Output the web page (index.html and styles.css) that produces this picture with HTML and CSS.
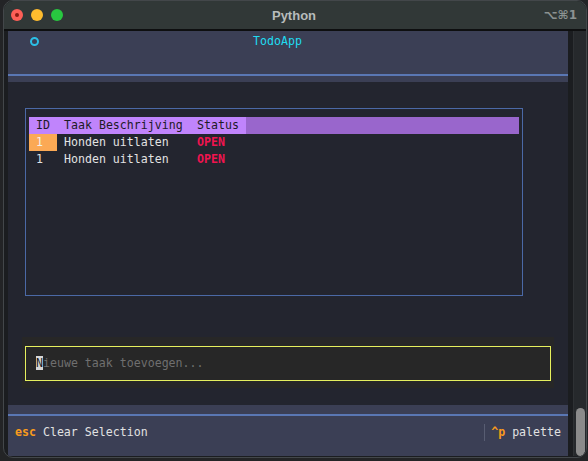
FILE: index.html
```html
<!DOCTYPE html>
<html>
<head>
<meta charset="utf-8">
<link rel="stylesheet" href="styles.css">
</head>
<body>
<div class="window">
  <div class="titlebar">
    <div class="lights">
      <span class="light red"><i></i></span>
      <span class="light yellow"></span>
      <span class="light green"></span>
    </div>
    <div class="title">Python</div>
    <div class="shortcut">⌥⌘1</div>
  </div>
  <div class="sep-line"></div>
  <div class="frame">
    <div class="term">
      <header class="app-header">
        <div class="header-top">
          <div class="header-row">
            <span class="app-icon"></span>
            <span class="app-title">TodoApp</span>
          </div>
        </div>
      </header>
      <main class="app-body">
        <div class="table-box">
          <div class="grid">
            <div class="th">ID</div>
            <div class="th">Taak Beschrijving</div>
            <div class="th">Status</div>
            <div class="th-fill"></div>

            <div class="td sel">1</div>
            <div class="td">Honden uitlaten</div>
            <div class="td open">OPEN</div>
            <div></div>

            <div class="td">1</div>
            <div class="td">Honden uitlaten</div>
            <div class="td open">OPEN</div>
            <div></div>
          </div>
        </div>
        <div class="input-wrap">
          <div class="input"><span class="cursor">N</span>ieuwe taak toevoegen...</div>
        </div>
      </main>
      <footer class="app-footer">
        <div class="footer-inner">
          <div class="footer-row">
            <span class="binding"><span class="key">esc</span> Clear Selection</span>
            <span class="binding right"><span class="key">^p</span> palette</span>
          </div>
        </div>
      </footer>
    </div>
    <div class="gutter"></div>
    <div class="scroll"><div class="thumb"></div></div>
  </div>
</div>
</body>
</html>
```
FILE: styles.css
```css
* { box-sizing: border-box; }
html, body { margin: 0; padding: 0; }
body {
  width: 588px;
  height: 461px;
  overflow: hidden;
  background: #232426;
  font-family: "DejaVu Sans Mono", monospace;
}
.window {
  margin-left: 3px;
  width: 584px;
  height: 458px;
  border: 1px solid #43474a;
  border-radius: 10px;
  background: #1b1d20;
  overflow: hidden;
  display: flex;
  flex-direction: column;
}
.titlebar {
  height: 28px;
  flex: none;
  background: #313837;
  display: grid;
  grid-template-columns: 1fr auto 1fr;
  align-items: center;
  padding: 0 9px 0 7px;
}
.lights { display: flex; gap: 8px; }
.light {
  width: 12px;
  height: 12px;
  border-radius: 50%;
  display: flex;
  align-items: center;
  justify-content: center;
}
.red { background: #fe5f57; }
.red i { width: 4px; height: 4px; border-radius: 50%; background: #8c1a12; }
.yellow { background: #febc2e; }
.green { background: #28c840; }
.title {
  font-family: "Liberation Sans", Arial, sans-serif;
  font-weight: 700;
  font-size: 13px;
  color: #b7bbbb;
}
.shortcut {
  justify-self: end;
  font-family: "DejaVu Sans", sans-serif;
  font-weight: 700;
  font-size: 12px;
  color: #8c9291;
}
.sep-line { height: 2px; flex: none; background: #0e0f10; }
.frame { display: flex; padding-left: 4px; height: 425px; flex: none; }
.term {
  width: 560px;
  height: 425px;
  flex: none;
  display: flex;
  flex-direction: column;
  font-size: 11.6px;
  line-height: 17px;
  color: #e2e2e2;
}
.gutter { width: 5px; flex: none; background: #1b1d20; }
.scroll {
  width: 13px;
  flex: none;
  border-left: 1px solid #2e3134;
  background: #26292c;
  padding: 377px 0 0 2px;
}
.thumb { width: 9px; height: 48px; background: #8b8b8b; border-radius: 5px; }

.app-header { height: 51px; flex: none; background: #3b3f55; padding-bottom: 6px; }
.header-top { height: 45px; border-bottom: 2px solid #5a77b4; padding-top: 2px; }
.header-row { height: 17px; display: flex; align-items: center; padding-left: 22px; }
.app-icon {
  width: 9px;
  height: 9px;
  border: 2px solid #2bbfe6;
  border-radius: 50%;
}
.app-title { margin-left: 214px; color: #1fdcf2; }

.app-body { height: 323px; flex: none; background: #23252f; padding: 26px 0 0 14px; }
.table-box {
  margin-left: 3px;
  width: 498px;
  height: 188px;
  border: 1px solid #4b69a6;
  padding: 8px 3px 0;
}
.grid {
  display: grid;
  grid-template-columns: 28px 133px 56px 1fr;
  grid-auto-rows: 17px;
  white-space: pre;
}
.th { background: #c084fc; color: #1d1b26; padding-left: 7px; }
.th-fill { background: #9966cc; }
.td { padding-left: 7px; }
.td.sel { background: #fba955; color: #f4f0ea; }
.open { color: #f01450; font-weight: 700; }

.input-wrap {
  margin-top: 41px;
  width: 532px;
  height: 51px;
  background: #272727;
  padding: 9px 3px 7px;
}
.input {
  height: 35px;
  border: 1px solid #e6f05e;
  padding: 8px 0 0 10px;
  color: #6f6f6f;
  white-space: pre;
}
.cursor { background: #d6d6d6; color: #1e1e1e; }

.app-footer { height: 51px; flex: none; background: #3b3f55; padding-top: 9px; }
.footer-inner { border-top: 2px solid #5a77b4; padding-top: 8px; }
.footer-row { height: 17px; display: flex; padding: 0 7px; white-space: pre; }
.key { color: #f99b1c; font-weight: 700; }
.right { margin-left: auto; border-left: 1px solid #585d72; padding-left: 6px; }
```
